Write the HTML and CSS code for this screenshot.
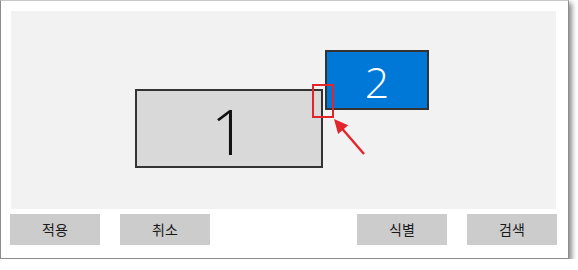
FILE: index.html
```html
<!DOCTYPE html>
<html lang="ko">
<head>
<meta charset="utf-8">
<link rel="stylesheet" href="styles.css">
</head>
<body>
<div class="window">
  <div class="canvas">
    <div class="monitor monitor-1"><span>1</span></div>
    <div class="monitor monitor-2"><span>2</span></div>
    <div class="highlight"></div>
    <svg class="arrow" width="545" height="198" viewBox="0 0 545 198">
      <line x1="353" y1="143" x2="331" y2="117.5" stroke="#e3242b" stroke-width="2.4"/>
      <polygon points="323,108 337.2,114.3 327.1,123" fill="#e3242b"/>
    </svg>
  </div>
  <div class="buttons">
    <button class="btn">적용</button>
    <button class="btn">취소</button>
    <button class="btn btn-push">식별</button>
    <button class="btn">검색</button>
  </div>
</div>
</body>
</html>
```
FILE: styles.css
```css
html, body {
  margin: 0;
  padding: 0;
  background: #ffffff;
}
.window {
  box-sizing: border-box;
  width: 569px;
  height: 259px;
  border: 1px solid #8c8c8c;
  border-top-color: #c8c8c8;
  background: #ffffff;
  box-shadow: 3px 3px 5px rgba(0, 0, 0, 0.45);
  padding: 10px 0 0 9px;
}
.canvas {
  position: relative;
  margin-left: 1px;
  width: 545px;
  height: 198px;
  background: #f2f2f2;
}
.monitor {
  position: absolute;
  box-sizing: border-box;
  border: 2px solid #333333;
  display: flex;
  align-items: center;
  justify-content: center;
  font-family: "Open Sans", "Noto Sans", sans-serif;
  font-weight: 300;
  line-height: 1;
}
.monitor-1 {
  left: 124px;
  top: 78px;
  width: 188px;
  height: 79px;
  background: #d9d9d9;
  color: #111111;
  font-size: 63px;
}
.monitor-1 span {
  margin-top: 4px;
}
.monitor-2 {
  left: 314px;
  top: 39px;
  width: 104px;
  height: 60px;
  background: #0078d7;
  color: #ffffff;
  font-size: 43px;
}
.monitor-2 span {
  margin-top: 2px;
}
.highlight {
  position: absolute;
  box-sizing: border-box;
  left: 301px;
  top: 73px;
  width: 22px;
  height: 34px;
  border: 2px solid #e3242b;
}
.arrow {
  position: absolute;
  left: 0;
  top: 0;
}
.buttons {
  display: flex;
  gap: 20px;
  margin-top: 5px;
  width: 547px;
}
.btn {
  width: 90px;
  height: 31px;
  border: none;
  margin: 0;
  padding: 0;
  background: #cccccc;
  color: #1a1a1a;
  font-family: "Noto Sans CJK KR", "Noto Sans", sans-serif;
  font-size: 14px;
  line-height: 31px;
}
.btn-push {
  margin-left: auto;
}
```
